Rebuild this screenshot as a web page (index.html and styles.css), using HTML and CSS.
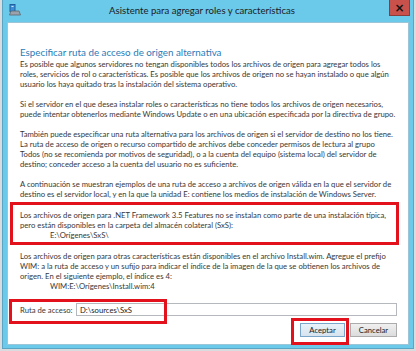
FILE: index.html
```html
<!DOCTYPE html>
<html lang="es">
<head>
  <meta charset="UTF-8" />
  <title>Asistente para agregar roles y características</title>
  <link rel="stylesheet" href="styles.css">
</head>
<body>
  <div class="window">
    <div class="titlebar">
      <svg class="app-icon" width="12" height="12" viewBox="0 0 12 12">
        <rect x="1" y="0.5" width="5" height="7" fill="#3a8fd6" stroke="#1f5f9e" stroke-width="1"/>
        <rect x="2.5" y="2" width="2" height="1" fill="#cfe6fa"/>
        <path d="M2 7 L10 7 L11.5 11 L0.5 11 Z" fill="#9aa3ab" stroke="#5d666e" stroke-width="0.8"/>
      </svg>
      <span class="title">Asistente para agregar roles y características</span>
      <button class="close">×</button>
    </div>

    <div class="client">
      <h1 class="heading">Especificar ruta de acceso de origen alternativa</h1>

      <p>Es posible que algunos servidores no tengan disponibles todos los archivos de origen para agregar todos los<br>
      roles, servicios de rol o características. Es posible que los archivos de origen no se hayan instalado o que algún<br>
      usuario los haya quitado tras la instalación del sistema operativo.</p>

      <p>Si el servidor en el que desea instalar roles o características no tiene todos los archivos de origen necesarios,<br>
      puede intentar obtenerlos mediante Windows Update o en una ubicación especificada por la directiva de grupo.</p>

      <p>También puede especificar una ruta alternativa para los archivos de origen si el servidor de destino no los tiene.<br>
      La ruta de acceso de origen o recurso compartido de archivos debe conceder permisos de lectura al grupo<br>
      Todos (no se recomienda por motivos de seguridad), o a la cuenta del equipo (sistema local) del servidor de<br>
      destino; conceder acceso a la cuenta del usuario no es suficiente.</p>

      <p>A continuación se muestran ejemplos de una ruta de acceso a archivos de origen válida en la que el servidor de<br>
      destino es el servidor local, y en la que la unidad E: contiene los medios de instalación de Windows Server.</p>

      <div class="marked">
        <p>Los archivos de origen para .NET Framework 3.5 Features no se instalan como parte de una instalación típica,<br>
        pero están disponibles en la carpeta del almacén colateral (SxS):<br>
        <span class="indent">E:\Orígenes\SxS\</span></p>
      </div>

      <p class="last">Los archivos de origen para otras características están disponibles en el archivo Install.wim. Agregue el prefijo<br>
      WIM: a la ruta de acceso y un sufijo para indicar el índice de la imagen de la que se obtienen los archivos de<br>
      origen. En el siguiente ejemplo, el índice es 4:<br>
      <span class="indent">WIM:E:\Orígenes\Install.wim:4</span></p>

      <div class="path-row">
        <label for="path">Ruta de acceso:</label>
        <input id="path" type="text" value="D:\sources\SxS">
        <div class="mark mark-path"></div>
      </div>

      <div class="actions">
        <button class="btn default">Aceptar</button>
        <button class="btn">Cancelar</button>
        <div class="mark mark-ok"></div>
      </div>
    </div>
  </div>
</body>
</html>
```

FILE: styles.css
```css
/* Page behind the dialog */
body {
  margin: 0;
  background: #d9dcdf;
  font-family: Lato, "Noto Sans", sans-serif;
  color: #383838;
}

/* Dialog frame */
.window {
  width: 410px;
  height: 348px;
  margin-left: 2px;
  background: #6bc9ea;
  border: 1px solid #5aa5c4;
  border-top: none;
  display: flex;
  flex-direction: column;
}

.titlebar {
  height: 22px;
  display: flex;
  align-items: center;
  position: relative;
}

.app-icon {
  margin-left: 6px;
  margin-top: -2px;
}

.title {
  flex: 1;
  text-align: center;
  font-size: 9.6px;
  color: #1c1c1c;
  margin-left: -6px;
  margin-top: -1px;
}

.close {
  align-self: flex-start;
  width: 21px;
  height: 16px;
  margin-right: 3px;
  padding: 0;
  background: #c9514b;
  border: 1px solid #8a3d39;
  border-top: none;
  color: #111;
  font-family: "DejaVu Sans", sans-serif;
  font-size: 12px;
  font-weight: bold;
  line-height: 14px;
}

/* White content area */
.client {
  flex: 1;
  margin: 0 4px 3px 4px;
  background: #fff;
  border: 1px solid #9cc6d8;
  padding: 0 11px 0 12px;
  display: flex;
  flex-direction: column;
}

.heading {
  margin: 23px 0 0 0;
  font-size: 9.8px;
  font-weight: normal;
  line-height: 13px;
  color: #2a7bb8;
}

.client p {
  margin: 0 0 10px 0;
  font-size: 7.7px;
  line-height: 10px;
  white-space: nowrap;
}

.indent {
  padding-left: 30px;
}

/* Red highlight around the .NET note */
.marked {
  margin: -7px 0 6px -10px;
  width: 376px;
  border: 3px solid #e3111b;
  padding: 5px 0 2px 7px;
}

.marked p {
  margin: 0;
}

.client p.last {
  margin-bottom: 0;
}

/* Path field */
.path-row {
  margin-top: 12px;
  display: flex;
  align-items: center;
  position: relative;
}

.path-row label {
  font-size: 7.7px;
  width: 56px;
}

.path-row input {
  flex: 1;
  height: 13px;
  box-sizing: border-box;
  border: 1px solid #b5b8bd;
  padding: 0 3px;
  font-family: Lato, "Noto Sans", sans-serif;
  font-size: 7.7px;
  color: #222;
}

/* Buttons */
.actions {
  margin-top: 7px;
  display: flex;
  justify-content: flex-end;
  gap: 5px;
  position: relative;
}

.btn {
  height: 14px;
  padding: 0;
  font-family: Lato, "Noto Sans", sans-serif;
  font-size: 7.7px;
  color: #222;
  background: linear-gradient(#f0f0f0, #dcdcdc);
  border: 1px solid #acacac;
  width: 47px;
}

.btn.default {
  width: 45px;
  border-color: #7aa6cc;
  background: linear-gradient(#eaf2f9, #d6e3ee);
}

/* Red annotation frames drawn on top of the dialog */
.mark {
  position: absolute;
  border: 3px solid #e3111b;
  pointer-events: none;
}

.mark-path {
  left: -11px;
  top: -4px;
  width: 152px;
  height: 19px;
}

.mark-ok {
  right: 48px;
  top: -5px;
  width: 52px;
  height: 21px;
}
```
